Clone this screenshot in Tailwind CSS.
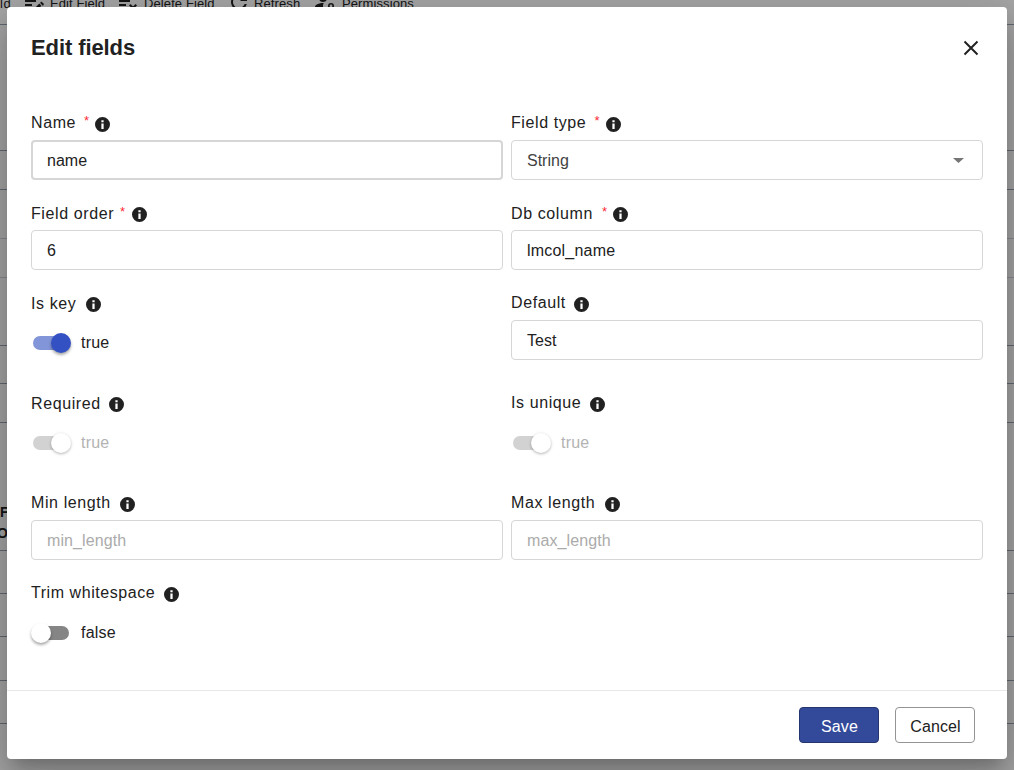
<!DOCTYPE html>
<html lang="en">
<head>
  <meta charset="UTF-8" />
  <title>Edit fields</title>
  <script src="https://cdn.jsdelivr.net/npm/@tailwindcss/browser@4"></script>
</head>
<body class="relative w-[1014px] h-[770px] overflow-hidden bg-white font-['Liberation_Sans',Arial,sans-serif] text-[#212121]">

  <!-- page behind the dialog -->
  <div class="-mt-[10px] text-[13px] tracking-[0.1px] text-[#222]">
    <div class="flex items-start h-[35px] border-b border-gray-400">
      <span class="mt-[4px] w-[11px] shrink-0 tracking-[0.5px]">ld</span>
      <svg class="ml-[11px] w-[24px] h-[24px] shrink-0" viewBox="0 0 24 24" fill="#222"><path d="M3 10h11v2H3v-2zm0-2h11V6H3v2zm0 8h7v-2H3v2zm15.01-3.13.71-.71c.39-.39 1.02-.39 1.41 0l1.41 1.41c.39.39.39 1.02 0 1.41l-.71.71-2.82-2.82zm-.71.71L12 18.88V21h2.12l5.3-5.3-2.12-2.12z"/></svg>
      <span class="ml-[4px] mt-[4px] w-[55px] shrink-0 whitespace-nowrap">Edit Field</span>
      <svg class="ml-[11px] w-[24px] h-[24px] shrink-0" viewBox="0 0 24 24" fill="#222"><path d="M14 10H3v2h11v-2zm0-4H3v2h11V6zM3 16h7v-2H3v2zm11.41 6L17 19.41 19.59 22 21 20.59 18.41 18 21 15.41 19.59 14 17 16.59 14.41 14 13 15.41 15.59 18 13 20.59 14.41 22z"/></svg>
      <span class="ml-[4px] mt-[4px] w-[71px] shrink-0 whitespace-nowrap">Delete Field</span>
      <svg class="ml-[12px] w-[24px] h-[24px] shrink-0" viewBox="0 0 24 24" fill="#222"><path d="M17.65 6.35C16.2 4.9 14.21 4 12 4c-4.42 0-7.99 3.58-7.99 8s3.57 8 7.99 8c3.73 0 6.84-2.55 7.73-6h-2.08c-.82 2.33-3.04 4-5.65 4-3.31 0-6-2.69-6-6s2.69-6 6-6c1.66 0 3.14.69 4.22 1.78L13 11h7V4l-2.35 2.35z"/></svg>
      <span class="ml-[3px] mt-[4px] w-[46px] shrink-0 whitespace-nowrap">Refresh</span>
      <svg class="ml-[13px] w-[24px] h-[24px] shrink-0" viewBox="0 0 24 24" fill="#222"><circle cx="10" cy="8" r="4"/><path d="M10.67 13.02c-.22-.01-.44-.02-.67-.02-2.42 0-4.68.67-6.61 1.82-.88.52-1.39 1.5-1.39 2.53V20h9.26c-.79-1.13-1.26-2.51-1.26-4 0-1.07.25-2.07.67-2.98z"/><circle cx="18" cy="16" r="2.2" fill="none" stroke="#222" stroke-width="1.6"/></svg>
      <span class="ml-[5px] mt-[4px] whitespace-nowrap">Permissions</span>
    </div>
    <div class="h-[126px] border-b border-gray-400"></div>
    <div class="h-[39px] border-b border-gray-400"></div>
    <div class="h-[49px] border-b border-gray-300"></div>
    <div class="h-[39px] border-b border-gray-300"></div>
    <div class="h-[68px] border-b border-gray-400"></div>
    <div class="h-[38px] border-b border-gray-400"></div>
    <div class="h-[39px] border-b border-gray-400"></div>
    <div class="h-[128px] border-b border-gray-400 flex flex-col justify-end pb-[6px] text-[14px] font-bold leading-[21px]">
      <span>F</span>
      <span class="-ml-[3px]">Or</span>
    </div>
    <div class="h-[43px] border-b border-gray-400"></div>
    <div class="h-[43px] border-b border-gray-400"></div>
    <div class="h-[44px] border-b border-gray-400"></div>
    <div class="h-[43px] border-b border-gray-400"></div>
  </div>
  <div class="absolute inset-0 bg-black/35"></div>

  <!-- dialog -->
  <div class="absolute left-[7px] top-[7px] w-[1000px] h-[752px] bg-white rounded-[4px] shadow-[0_11px_15px_-7px_rgba(0,0,0,0.2),0_24px_38px_3px_rgba(0,0,0,0.14),0_9px_46px_8px_rgba(0,0,0,0.12)] flex flex-col">
    <div class="flex items-center justify-between h-[82px] shrink-0 pl-[24px] pr-[28px] pb-[1px]">
      <h2 class="text-[22px] font-bold tracking-[-0.1px]">Edit fields</h2>
      <svg class="w-[16px] h-[16px]" viewBox="0 0 16 16" fill="none" stroke="#212121" stroke-width="2"><path d="M1.5 1.5 14.5 14.5M14.5 1.5 1.5 14.5"/></svg>
    </div>

    <div class="flex-1 pt-[21px] px-[24px] grid grid-cols-[472px_472px] gap-x-[8px] grid-rows-[90px_90px_100px_100px_90px] content-start text-[16px]">

      <div>
        <div class="flex items-center h-[24px] mt-[1px] tracking-[0.6px]">Name<span class="text-red-500 text-[13px] ml-[8px] -mt-[5px]">*</span><svg class="w-[15px] h-[15px] ml-[5px] mt-[3px]" viewBox="0 0 24 24" fill="#212121"><path fill-rule="evenodd" d="M12 0a12 12 0 1 0 0 24 12 12 0 0 0 0-24zm1.8 19h-3.6v-8.6h3.6zm0-10.6h-3.6V5h3.6z"/></svg></div>
        <div class="mt-[5px] h-[40px] border-2 border-[#d6d6d6] rounded-[4px] flex items-center pl-[14px] pt-[1px]">name</div>
      </div>
      <div>
        <div class="flex items-center h-[24px] mt-[1px] tracking-[0.6px]">Field type<span class="text-red-500 text-[13px] ml-[8px] -mt-[5px]">*</span><svg class="w-[15px] h-[15px] ml-[6px] mt-[3px]" viewBox="0 0 24 24" fill="#212121"><path fill-rule="evenodd" d="M12 0a12 12 0 1 0 0 24 12 12 0 0 0 0-24zm1.8 19h-3.6v-8.6h3.6zm0-10.6h-3.6V5h3.6z"/></svg></div>
        <div class="mt-[5px] h-[40px] border border-[#d6d6d6] rounded-[4px] flex items-center justify-between pl-[15px] pr-[18px] pt-[1px] text-[#424242]">String
          <svg class="w-[11px] h-[5px]" viewBox="0 0 11 5" fill="#757575"><path d="M0 0h11L5.5 5z"/></svg>
        </div>
      </div>

      <div>
        <div class="flex items-center h-[24px] mt-[2px] tracking-[0.6px]">Field order<span class="text-red-500 text-[13px] ml-[6px] -mt-[5px]">*</span><svg class="w-[15px] h-[15px] ml-[6px] mt-[1px]" viewBox="0 0 24 24" fill="#212121"><path fill-rule="evenodd" d="M12 0a12 12 0 1 0 0 24 12 12 0 0 0 0-24zm1.8 19h-3.6v-8.6h3.6zm0-10.6h-3.6V5h3.6z"/></svg></div>
        <div class="mt-[4px] h-[40px] border border-[#d6d6d6] rounded-[4px] flex items-center pl-[15px] pt-[1px]">6</div>
      </div>
      <div>
        <div class="flex items-center h-[24px] mt-[2px] tracking-[0.6px]">Db column<span class="text-red-500 text-[13px] ml-[9px] -mt-[5px]">*</span><svg class="w-[15px] h-[15px] ml-[5px] mt-[1px]" viewBox="0 0 24 24" fill="#212121"><path fill-rule="evenodd" d="M12 0a12 12 0 1 0 0 24 12 12 0 0 0 0-24zm1.8 19h-3.6v-8.6h3.6zm0-10.6h-3.6V5h3.6z"/></svg></div>
        <div class="mt-[4px] h-[40px] border border-[#d6d6d6] rounded-[4px] flex items-center pl-[15px] pt-[1px] tracking-[0.2px]">lmcol_name</div>
      </div>

      <div>
        <div class="flex items-center h-[24px] mt-[2px] tracking-[0.6px]">Is key<svg class="w-[15px] h-[15px] ml-[10px] mt-[1px]" viewBox="0 0 24 24" fill="#212121"><path fill-rule="evenodd" d="M12 0a12 12 0 1 0 0 24 12 12 0 0 0 0-24zm1.8 19h-3.6v-8.6h3.6zm0-10.6h-3.6V5h3.6z"/></svg></div>
        <div class="mt-[4px] h-[40px] pt-[6px] flex items-center gap-[10px] pl-[2px] tracking-[0.2px]">
          <span class="relative block w-[36px] h-[14px] rounded-full bg-[#8295d8]"><span class="absolute -right-[2px] -top-[3px] w-[20px] h-[20px] rounded-full bg-[#3451c4] shadow-[0_2px_3px_rgba(0,0,0,0.35)]"></span></span>
          <span class="ml-[2px]">true</span>
        </div>
      </div>
      <div>
        <div class="flex items-center h-[24px] mt-[1px] tracking-[0.6px]">Default<svg class="w-[15px] h-[15px] ml-[8px] mt-[2px]" viewBox="0 0 24 24" fill="#212121"><path fill-rule="evenodd" d="M12 0a12 12 0 1 0 0 24 12 12 0 0 0 0-24zm1.8 19h-3.6v-8.6h3.6zm0-10.6h-3.6V5h3.6z"/></svg></div>
        <div class="mt-[5px] h-[40px] border border-[#d6d6d6] rounded-[4px] flex items-center pl-[15px] pt-[1px]">Test</div>
      </div>

      <div>
        <div class="flex items-center h-[24px] mt-[2px] tracking-[0.6px]">Required<svg class="w-[15px] h-[15px] ml-[8px] mt-[1px]" viewBox="0 0 24 24" fill="#212121"><path fill-rule="evenodd" d="M12 0a12 12 0 1 0 0 24 12 12 0 0 0 0-24zm1.8 19h-3.6v-8.6h3.6zm0-10.6h-3.6V5h3.6z"/></svg></div>
        <div class="mt-[4px] h-[40px] pt-[6px] flex items-center gap-[10px] pl-[2px] tracking-[0.2px] text-[#b3b3b3]">
          <span class="relative block w-[36px] h-[14px] rounded-full bg-[#d2d2d2]"><span class="absolute -right-[2px] -top-[3px] w-[20px] h-[20px] rounded-full bg-white shadow-[0_1px_3px_rgba(0,0,0,0.3)]"></span></span>
          <span class="ml-[2px]">true</span>
        </div>
      </div>
      <div>
        <div class="flex items-center h-[24px] mt-[1px] tracking-[0.6px]">Is unique<svg class="w-[15px] h-[15px] ml-[9px] mt-[2px]" viewBox="0 0 24 24" fill="#212121"><path fill-rule="evenodd" d="M12 0a12 12 0 1 0 0 24 12 12 0 0 0 0-24zm1.8 19h-3.6v-8.6h3.6zm0-10.6h-3.6V5h3.6z"/></svg></div>
        <div class="mt-[5px] h-[40px] pt-[6px] flex items-center gap-[10px] pl-[2px] tracking-[0.2px] text-[#b3b3b3]">
          <span class="relative block w-[36px] h-[14px] rounded-full bg-[#d2d2d2]"><span class="absolute -right-[2px] -top-[3px] w-[20px] h-[20px] rounded-full bg-white shadow-[0_1px_3px_rgba(0,0,0,0.3)]"></span></span>
          <span class="ml-[2px]">true</span>
        </div>
      </div>

      <div>
        <div class="flex items-center h-[24px] mt-[1px] tracking-[0.6px]">Min length<svg class="w-[15px] h-[15px] ml-[9px] mt-[2px]" viewBox="0 0 24 24" fill="#212121"><path fill-rule="evenodd" d="M12 0a12 12 0 1 0 0 24 12 12 0 0 0 0-24zm1.8 19h-3.6v-8.6h3.6zm0-10.6h-3.6V5h3.6z"/></svg></div>
        <div class="mt-[5px] h-[40px] border border-[#d6d6d6] rounded-[4px] flex items-center pl-[15px] pt-[1px] tracking-[0.1px] text-[#ababab]">min_length</div>
      </div>
      <div>
        <div class="flex items-center h-[24px] mt-[1px] tracking-[0.6px]">Max length<svg class="w-[15px] h-[15px] ml-[10px] mt-[2px]" viewBox="0 0 24 24" fill="#212121"><path fill-rule="evenodd" d="M12 0a12 12 0 1 0 0 24 12 12 0 0 0 0-24zm1.8 19h-3.6v-8.6h3.6zm0-10.6h-3.6V5h3.6z"/></svg></div>
        <div class="mt-[5px] h-[40px] border border-[#d6d6d6] rounded-[4px] flex items-center pl-[15px] pt-[1px] tracking-[0.1px] text-[#ababab]">max_length</div>
      </div>

      <div>
        <div class="flex items-center h-[24px] mt-[1px] tracking-[0.55px]">Trim whitespace<svg class="w-[15px] h-[15px] ml-[9px] mt-[2px]" viewBox="0 0 24 24" fill="#212121"><path fill-rule="evenodd" d="M12 0a12 12 0 1 0 0 24 12 12 0 0 0 0-24zm1.8 19h-3.6v-8.6h3.6zm0-10.6h-3.6V5h3.6z"/></svg></div>
        <div class="mt-[5px] h-[40px] pt-[6px] flex items-center gap-[10px] pl-[2px] tracking-[0.2px]">
          <span class="relative block w-[36px] h-[14px] rounded-full bg-[#858585]"><span class="absolute -left-[2px] -top-[3px] w-[20px] h-[20px] rounded-full bg-white shadow-[0_2px_3px_rgba(0,0,0,0.35)]"></span></span>
          <span class="ml-[2px]">false</span>
        </div>
      </div>
    </div>

    <div class="h-[69px] shrink-0 border-t border-[#e8e8e8] flex items-center justify-end gap-[16px] pr-[32px]">
      <button class="w-[80px] h-[36px] pt-[3px] pl-[1px] bg-[#334a9b] border border-[#24356f] rounded-[4px] text-white text-[16px] tracking-[0.1px]">Save</button>
      <button class="w-[80px] h-[36px] pt-[3px] pl-[1px] bg-white border border-[#949494] rounded-[4px] text-[16px] tracking-[0.1px]">Cancel</button>
    </div>
  </div>
</body>
</html>
